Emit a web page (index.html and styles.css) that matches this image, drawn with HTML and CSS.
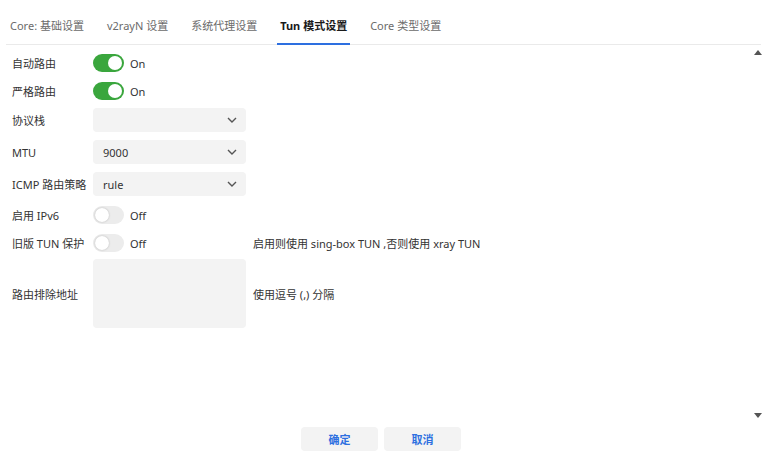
FILE: index.html
```html
<!DOCTYPE html>
<html lang="zh">
<head>
    <meta charset="utf-8" />
    <title>Tun 模式设置</title>
    <link rel="stylesheet" href="styles.css">
</head>
<body>
    <div class="window">
        <div class="tabs">
            <span class="tab">Core: 基础设置</span>
            <span class="tab">v2rayN 设置</span>
            <span class="tab">系统代理设置</span>
            <span class="tab tab--active">Tun 模式设置</span>
            <span class="tab">Core 类型设置</span>
        </div>

        <div class="content">
            <div class="form">
                <div class="row row--toggle">
                    <label class="row__label">自动路由</label>
                    <span class="switch switch--on"><span class="switch__knob"></span></span>
                    <span class="switch__text">On</span>
                </div>
                <div class="row row--toggle">
                    <label class="row__label">严格路由</label>
                    <span class="switch switch--on"><span class="switch__knob"></span></span>
                    <span class="switch__text">On</span>
                </div>
                <div class="row row--select">
                    <label class="row__label">协议栈</label>
                    <div class="select"><span class="select__value"></span><svg class="select__arrow" width="10" height="6" viewBox="0 0 10 6"><path d="M1 1l4 4 4-4" fill="none" stroke="#555" stroke-width="1.4"/></svg></div>
                </div>
                <div class="row row--select">
                    <label class="row__label">MTU</label>
                    <div class="select"><span class="select__value">9000</span><svg class="select__arrow" width="10" height="6" viewBox="0 0 10 6"><path d="M1 1l4 4 4-4" fill="none" stroke="#555" stroke-width="1.4"/></svg></div>
                </div>
                <div class="row row--select">
                    <label class="row__label">ICMP 路由策略</label>
                    <div class="select"><span class="select__value">rule</span><svg class="select__arrow" width="10" height="6" viewBox="0 0 10 6"><path d="M1 1l4 4 4-4" fill="none" stroke="#555" stroke-width="1.4"/></svg></div>
                </div>
                <div class="row row--toggle">
                    <label class="row__label">启用 IPv6</label>
                    <span class="switch"><span class="switch__knob"></span></span>
                    <span class="switch__text">Off</span>
                </div>
                <div class="row row--toggle">
                    <label class="row__label">旧版 TUN 保护</label>
                    <span class="switch"><span class="switch__knob"></span></span>
                    <span class="switch__text">Off</span>
                    <span class="row__hint">启用则使用 sing-box TUN ,否则使用 xray TUN</span>
                </div>
                <div class="row row--area">
                    <label class="row__label">路由排除地址</label>
                    <div class="textarea"></div>
                    <span class="row__hint">使用逗号 (,) 分隔</span>
                </div>
            </div>

            <div class="scrollbar">
                <span class="scrollbar__up"></span>
                <span class="scrollbar__down"></span>
            </div>
        </div>

        <div class="buttons">
            <button class="btn">确定</button>
            <button class="btn">取消</button>
        </div>
    </div>
</body>
</html>
```

FILE: styles.css
```css
* {
    box-sizing: border-box; margin: 0; padding: 0;
}
body {
    width: 768px; height: 461px; overflow: hidden;
    background: #fff;
    font-family: "Noto Sans", "Noto Sans CJK SC", sans-serif;
    font-size: 11px; color: #333;
}
.window {
    display: flex; flex-direction: column; height: 100%;
}

/* tabs */
.tabs {
    display: flex; align-items: stretch;
    height: 45px;
    margin: 0 7px 0 6px;
    padding-left: 1px;
    border-bottom: 1px solid #eaeaea;
}
.tab {
    display: flex; align-items: center;
    padding: 6px 3px 0;
    margin-right: 17px;
    color: #6b6b6b;
    border-bottom: 2px solid transparent;
    margin-bottom: -1px;
    white-space: nowrap;
}
.tab--active {
    color: #1a1a1a; font-weight: bold;
    border-bottom-color: #2d6fe0;
}

/* form */
.content {
    flex: 1; display: flex; position: relative;
}
.form {
    flex: 1; padding: 4px 0 0 12px;
}
.row {
    display: flex; align-items: center;
}
.row--toggle { height: 28px; }
.row--select { height: 32px; padding-bottom: 2px; }
.row--area { height: 71px; padding-top: 2px; }
.row__label {
    width: 81px; flex: none; white-space: nowrap;
}
.row__hint {
    margin-left: 7px;
}
.switch {
    position: relative;
    width: 31px; height: 18px; flex: none;
    border-radius: 9px;
    background: #ececec;
}
.switch--on { background: #3aa63d; }
.switch__knob {
    position: absolute; top: 2px; left: 2px;
    width: 14px; height: 14px; border-radius: 50%;
    background: #fff;
    box-shadow: 0 0 2px rgba(0,0,0,.25);
}
.switch--on .switch__knob { left: 15px; box-shadow: none; }
.switch__text {
    width: 122px; padding-left: 6px; flex: none;
}

.select {
    width: 153px; height: 24px;
    display: flex; align-items: center; justify-content: space-between;
    padding: 0 9px 0 10px;
    background: #f3f3f3; border-radius: 4px;
}
.textarea {
    width: 153px; height: 69px; flex: none;
    background: #f3f3f3; border-radius: 4px;
}

/* fake scrollbar, drawn over the right edge */
.scrollbar__up, .scrollbar__down {
    position: absolute; right: 6px;
    width: 0; height: 0;
    border-left: 4px solid transparent;
    border-right: 4px solid transparent;
}
.scrollbar__up { top: 5px; border-bottom: 5px solid #555; }
.scrollbar__down { bottom: 9px; border-top: 5px solid #555; }

/* buttons */
.buttons {
    display: flex; justify-content: center; gap: 6px;
    height: 34px; padding-right: 6px;
}
.btn {
    width: 77px; height: 24px;
    border: none; border-radius: 4px;
    background: #f3f3f3; color: #2d6fe0;
    font: bold 11px "Noto Sans", "Noto Sans CJK SC", sans-serif;
}
```
